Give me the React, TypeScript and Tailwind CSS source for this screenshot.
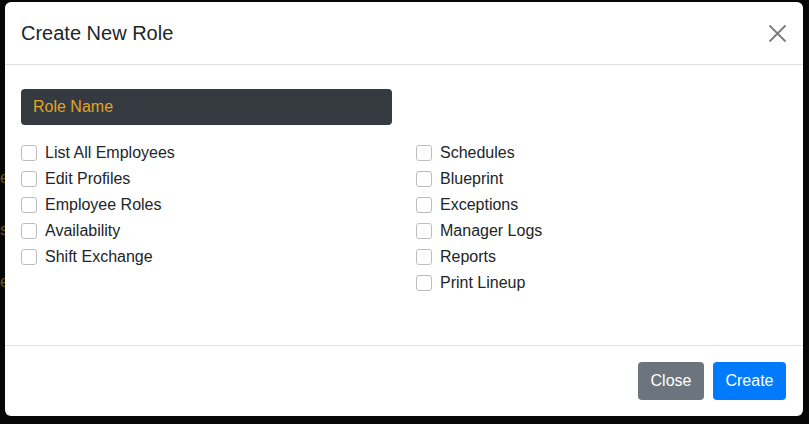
// Create New Role: modal dialog over a dimmed page
const leftPerms = ['List All Employees', 'Edit Profiles', 'Employee Roles', 'Availability', 'Shift Exchange'];
const rightPerms = ['Schedules', 'Blueprint', 'Exceptions', 'Manager Logs', 'Reports', 'Print Lineup'];

function PermCheck({ label }: { label: string }) {
  return (
    <label className="flex items-center h-[26px] gap-2 text-base text-[#212529]">
      <span className="w-4 h-4 rounded-[3px] border border-[#bdbdbd] bg-white shrink-0" />
      <span>{label}</span>
    </label>
  );
}

export default function App() {
  return (
    <div
      className="relative w-[809px] h-[424px] overflow-hidden bg-[#060606]"
      style={{ fontFamily: '"Liberation Sans", Arial, sans-serif' }}
    >
      {/* dimmed page behind the modal */}
      <div className="flex flex-col pt-[170px] gap-[36px] pl-0 text-[#6b5518] text-base leading-none">
        <span>e</span>
        <span>s</span>
        <span>e</span>
      </div>

      {/* Modal */}
      <div className="absolute left-[5px] top-[2px] w-[798px] bg-white rounded-[6px] flex flex-col">
        {/* Header */}
        <div className="flex items-center justify-between px-4 py-4 border-b border-[#dee2e6]">
          <h5 className="text-[20px] leading-[30px] text-[#212529]">Create New Role</h5>
          <button className="mr-[0px] p-0">
            <svg width="19" height="19" viewBox="0 0 19 19">
              <path d="M1.5 1.5 L17.5 17.5 M17.5 1.5 L1.5 17.5" stroke="#7b7b7b" strokeWidth="1.8" />
            </svg>
          </button>
        </div>

        {/* Body */}
        <div className="px-4 pt-6 pb-[49px]">
          <input
            placeholder="Role Name"
            className="w-[371px] h-9 px-3 rounded-[4px] bg-[#343a40] text-[#e0a526] placeholder:text-[#e0a526] text-base outline-none"
          />
          <div className="grid grid-cols-[395px_1fr] mt-[15px]">
            <div className="flex flex-col">
              {leftPerms.map((p) => (
                <PermCheck key={p} label={p} />
              ))}
            </div>
            <div className="flex flex-col">
              {rightPerms.map((p) => (
                <PermCheck key={p} label={p} />
              ))}
            </div>
          </div>
        </div>

        {/* Footer */}
        <div className="flex justify-end gap-[9px] pl-4 pr-[17px] py-4 border-t border-[#dee2e6]">
          <button className="h-[38px] px-[12.5px] rounded-[4px] bg-[#6c757d] text-white text-base">Close</button>
          <button className="h-[38px] px-[12.5px] rounded-[4px] bg-[#007bff] text-white text-base">Create</button>
        </div>
      </div>
    </div>
  );
}
